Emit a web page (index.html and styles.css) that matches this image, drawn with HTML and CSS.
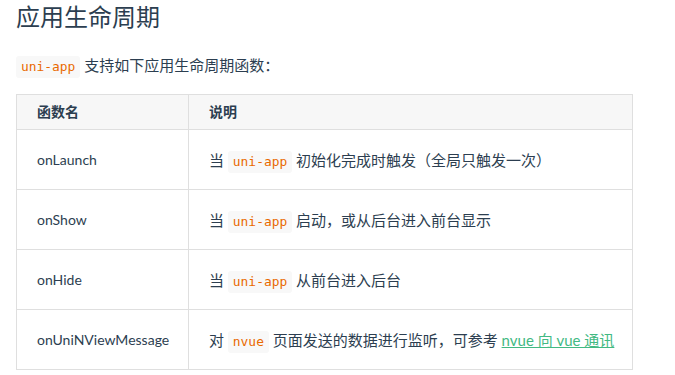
FILE: index.html
```html
<!DOCTYPE html>
<html lang="zh">
<head>
<meta charset="utf-8">
<link rel="stylesheet" href="styles.css">
</head>
<body>
<div class="page">
  <h2 class="title">应用生命周期</h2>
  <p class="intro"><code class="code">uni-app</code> 支持如下应用生命周期函数：</p>
  <table class="api">
    <colgroup><col class="col-name"><col></colgroup>
    <thead>
      <tr><th>函数名</th><th>说明</th></tr>
    </thead>
    <tbody>
      <tr><td class="fn">onLaunch</td><td>当 <code class="code">uni-app</code> 初始化完成时触发（全局只触发一次）</td></tr>
      <tr><td class="fn">onShow</td><td>当 <code class="code">uni-app</code> 启动，或从后台进入前台显示</td></tr>
      <tr><td class="fn">onHide</td><td>当 <code class="code">uni-app</code> 从前台进入后台</td></tr>
      <tr><td class="fn">onUniNViewMessage</td><td>对 <code class="code">nvue</code> 页面发送的数据进行监听，可参考 <a class="link" href="#">nvue 向 vue 通讯</a></td></tr>
    </tbody>
  </table>
</div>
</body>
</html>
```
FILE: styles.css
```css
html, body { margin: 0; padding: 0; background: #fff; }
body {
  font-family: Lato, "Noto Sans CJK SC", sans-serif;
  color: #2c3e50;
  font-size: 15px;
}
.page { padding: 0 16px; }
.title {
  margin: 2px 0 0;
  font-size: 24px;
  line-height: 30px;
  font-weight: 400;
  color: #2c3e50;
}
.intro {
  margin: 22px 0 0;
  line-height: 22px;
  height: 22px;
}
.code {
  font-family: "DejaVu Sans Mono", "Liberation Mono", monospace;
  font-size: 12.9px;
  line-height: 15px;
  color: #e96900;
  background: #f8f8f8;
  padding: 3px 5px 4px;
  border-radius: 3px;
}
.api {
  margin-top: 18px;
  border-collapse: collapse;
  table-layout: fixed;
  width: 617px;
}
.col-name { width: 172px; }
.api th, .api td {
  border: 1px solid #dfdfdf;
  text-align: left;
  padding: 0 6px 0 20px;
  line-height: 22px;
  white-space: nowrap;
}
.api th {
  background: #f7f7f7;
  font-weight: 700;
  font-size: 14px;
  height: 34px;
}
.api td { height: 59px; }
.api td.fn { font-size: 14px; }
.link { color: #42b983; text-decoration: underline; }
```
